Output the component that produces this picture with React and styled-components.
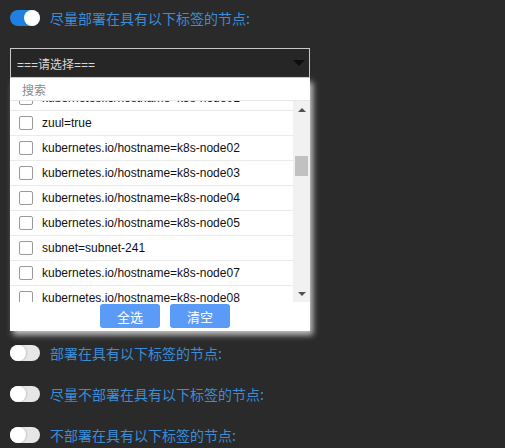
import React, { useLayoutEffect, useRef } from 'react';
import styled, { createGlobalStyle } from 'styled-components';

const GlobalStyle = createGlobalStyle`
  html, body {
    margin: 0;
    background: #2a2a2a;
  }
  body {
    font-family: "Liberation Sans", Arial, "Noto Sans CJK SC", sans-serif;
  }
`;

const labels = [];
for (let i = 0; i < 14; i++) {
  labels.push(i % 3 === 0 ? `zone=zone-${i + 1}` : `beta.kubernetes.io/os=linux-${i}`);
}
labels.push(
  'kubernetes.io/hostname=k8s-node01',
  'zuul=true',
  'kubernetes.io/hostname=k8s-node02',
  'kubernetes.io/hostname=k8s-node03',
  'kubernetes.io/hostname=k8s-node04',
  'kubernetes.io/hostname=k8s-node05',
  'subnet=subnet-241',
  'kubernetes.io/hostname=k8s-node07',
  'kubernetes.io/hostname=k8s-node08'
);
for (let i = 9; i < 53; i++) {
  labels.push(`kubernetes.io/hostname=k8s-node${String(i).padStart(2, '0')}`);
}

const Page = styled.div`
  padding: 10px 10px 0 10px;
`;

const SwitchRow = styled.div`
  display: flex;
  align-items: center;
  gap: 10px;
  height: 16px;
  margin-bottom: ${(p) => p.$after}px;
`;

const Track = styled.span`
  position: relative;
  width: 30px;
  height: 16px;
  border-radius: 8px;
  background: ${(p) => (p.$on ? '#1f80e0' : '#e6e6e6')};
  flex-shrink: 0;
`;

const Knob = styled.span`
  position: absolute;
  top: 0;
  left: ${(p) => (p.$on ? '14px' : '0')};
  width: 16px;
  height: 16px;
  border-radius: 50%;
  background: #fff;
  box-shadow: ${(p) => (p.$on ? 'none' : '1px 0 2px rgba(0,0,0,0.15)')};
`;

const Label = styled.span`
  font-family: "Noto Sans CJK SC", sans-serif;
  font-size: 14px;
  line-height: 16px;
  color: #3b8dd6;
`;

const SelectBox = styled.div`
  box-sizing: border-box;
  width: 300px;
  height: 30px;
  border: 1px solid #c8c8c8;
  background: #262626;
  display: flex;
  align-items: center;
  justify-content: space-between;
  padding: 0 4px 0 6px;
  font-family: "Liberation Sans", "Noto Sans CJK SC", sans-serif;
  font-size: 12px;
  color: #d8d8d8;
`;

const Caret = styled.span`
  width: 0;
  height: 0;
  border-left: 6px solid transparent;
  border-right: 6px solid transparent;
  border-top: 6px solid #0d0d0d;
`;

const Menu = styled.div`
  width: 300px;
  background: #fff;
  box-shadow: 3px 4px 6px rgba(205, 205, 205, 0.95);
  margin-bottom: 14px;
`;

const Search = styled.input`
  box-sizing: border-box;
  display: block;
  width: 100%;
  height: 23px;
  border: none;
  border-bottom: 1px solid #e6e6e6;
  outline: none;
  padding: 0 12px;
  font-family: "Noto Sans CJK SC", sans-serif;
  font-size: 12px;
  color: #333;
  &::placeholder {
    color: #8a8a8a;
  }
`;

const ListArea = styled.div`
  display: flex;
  height: 201px;
`;

const List = styled.div`
  flex: 1;
  min-width: 0;
  overflow: hidden;
`;

const Item = styled.label`
  box-sizing: border-box;
  display: flex;
  align-items: center;
  height: 25px;
  padding-left: 9px;
  border-bottom: 1px solid #ebebeb;
  font-size: 12px;
  color: #111;
  white-space: nowrap;
`;

const Box = styled.span`
  box-sizing: border-box;
  width: 14px;
  height: 14px;
  border: 1px solid #9a9a9a;
  border-radius: 2px;
  background: #fff;
  margin-right: 9px;
  flex-shrink: 0;
`;

const Rail = styled.div`
  width: 17px;
  flex-shrink: 0;
  background: #f1f1f1;
  display: flex;
  flex-direction: column;
  align-items: center;
`;

const Arrow = styled.div`
  height: 17px;
  width: 17px;
  display: flex;
  align-items: center;
  justify-content: center;
  &::after {
    content: "";
    width: 0;
    height: 0;
    border-left: 4px solid transparent;
    border-right: 4px solid transparent;
    ${(p) => (p.$down ? 'border-top: 4px solid #505050;' : 'border-bottom: 4px solid #505050;')}
  }
`;

const Thumb = styled.div`
  width: 13px;
  height: 20px;
  margin-top: 38px;
  background: #c1c1c1;
`;

const Gap = styled.div`
  flex: 1;
`;

const Footer = styled.div`
  display: flex;
  justify-content: center;
  gap: 10px;
  padding: 2px 0 3px 10px;
`;

const Button = styled.button`
  width: 60px;
  height: 24px;
  border: none;
  border-radius: 3px;
  background: #5a9bf8;
  color: #fff;
  font-family: "Noto Sans CJK SC", sans-serif;
  font-size: 13px;
  padding: 0;
`;

const Switch = ({ on, text, after = 0 }) => (
  <SwitchRow $after={after}>
    <Track $on={on}>
      <Knob $on={on} />
    </Track>
    <Label>{text}</Label>
  </SwitchRow>
);

const App = () => {
  const listRef = useRef(null);
  useLayoutEffect(() => {
    if (listRef.current) listRef.current.scrollTop = 365;
  }, []);

  return (
    <Page>
      <GlobalStyle />
      <Switch on text="尽量部署在具有以下标签的节点:" after={22} />
      <SelectBox>
        <span>===请选择===</span>
        <Caret />
      </SelectBox>
      <Menu>
        <Search placeholder="搜索" />
        <ListArea>
          <List ref={listRef}>
            {labels.map((l, i) => (
              <Item key={i}>
                <Box />
                {l}
              </Item>
            ))}
          </List>
          <Rail>
            <Arrow />
            <Thumb />
            <Gap />
            <Arrow $down />
          </Rail>
        </ListArea>
        <Footer>
          <Button>全选</Button>
          <Button>清空</Button>
        </Footer>
      </Menu>
      <Switch text="部署在具有以下标签的节点:" after={25} />
      <Switch text="尽量不部署在具有以下标签的节点:" after={25} />
      <Switch text="不部署在具有以下标签的节点:" />
    </Page>
  );
};

export default App;
